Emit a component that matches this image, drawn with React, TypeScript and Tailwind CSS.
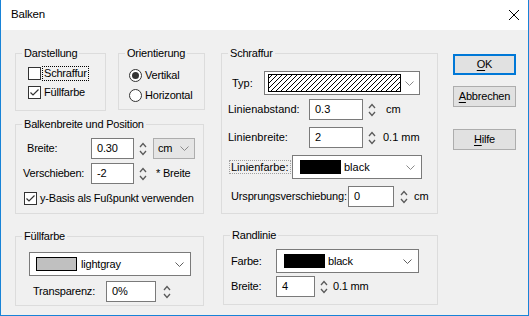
import type { ReactNode } from "react";

function Spin() {
  return (
    <svg width="8" height="21" viewBox="0 0 8 21" className="shrink-0">
      <path d="M1 9 L4 5.5 L7 9" fill="none" stroke="#5a5a5a" strokeWidth="1.3" />
      <path d="M1 13 L4 16.5 L7 13" fill="none" stroke="#5a5a5a" strokeWidth="1.3" />
    </svg>
  );
}

function Chevron({ color = "#5f5f5f" }: { color?: string }) {
  return (
    <svg width="9" height="5" viewBox="0 0 9 5" className="shrink-0">
      <path d="M0.5 0.5 L4.5 4.5 L8.5 0.5" fill="none" stroke={color} strokeWidth="1" />
    </svg>
  );
}

function Check({ checked = false }: { checked?: boolean }) {
  return (
    <span className="flex h-[13px] w-[13px] shrink-0 items-center justify-center border border-[#333] bg-white">
      {checked && (
        <svg width="11" height="11" viewBox="0 0 11 11">
          <path d="M1.5 5.5 L4 8 L9.5 2.5" fill="none" stroke="#333" strokeWidth="1.2" />
        </svg>
      )}
    </span>
  );
}

function Radio({ checked = false }: { checked?: boolean }) {
  return (
    <span className="flex h-[13px] w-[13px] shrink-0 items-center justify-center rounded-full border border-[#333] bg-white">
      {checked && <span className="h-[7px] w-[7px] rounded-full bg-[#333]" />}
    </span>
  );
}

function Group({
  title,
  className,
  children,
}: {
  title: string;
  className: string;
  children: ReactNode;
}) {
  return (
    <fieldset className={`border border-[#dcdcdc] ${className}`}>
      <legend className="ml-[6px] px-[2px] leading-[16px] tracking-[-0.2px]">{title}</legend>
      {children}
    </fieldset>
  );
}

function Field({ w, value }: { w: string; value: string }) {
  return (
    <div className={`flex h-[21px] shrink-0 items-center border border-[#7a7a7a] bg-white pl-[5px] ${w}`}>
      {value}
    </div>
  );
}

function Button({ label, mn, primary = false }: { label: string; mn: string; primary?: boolean }) {
  return (
    <div
      className={`flex h-[21px] w-[63px] items-center justify-center bg-[#e1e1e1] ${
        primary ? "border-2 border-[#0078d7]" : "border border-[#adadad]"
      }`}
    >
      <span>
        <span className="underline underline-offset-2">{mn}</span>
        {label}
      </span>
    </div>
  );
}

export default function App() {
  const hatch = [];
  for (let x = -18; x < 140; x += 5) hatch.push(x);

  return (
    <div className="flex h-[316px] w-[529px] flex-col whitespace-nowrap border-x border-b border-[#1883d7] font-['Liberation_Sans',Arial,sans-serif] text-[11px] text-black">
      {/* Title bar */}
      <div className="flex h-[30px] shrink-0 items-center justify-between bg-white pl-[10px] pr-[9px]">
        <span className="text-[11.5px] tracking-[-0.2px]">Balken</span>
        <svg width="10" height="10" viewBox="0 0 10 10">
          <path d="M0 0 L10 10 M10 0 L0 10" stroke="#000" strokeWidth="1" />
        </svg>
      </div>

      <div className="flex flex-1 bg-[#f0f0f0] pl-[14px] pt-[15px]">
        {/* Left column */}
        <div className="flex w-[190px] flex-col tracking-[-0.2px]">
          <div className="flex">
            <Group title="Darstellung" className="h-[66px] w-[91px]">
              <div className="flex flex-col gap-[6px] pl-[12px] pt-[6px]">
                <div className="flex h-[13px] items-center gap-[1px]">
                  <Check />
                  <span className="border border-dotted border-black px-px leading-[13px]">Schraffur</span>
                </div>
                <div className="flex h-[13px] items-center gap-[2px]">
                  <Check checked />
                  <span className="px-px">Füllfarbe</span>
                </div>
              </div>
            </Group>
            <Group title="Orientierung" className="ml-[12px] h-[65px] w-[87px]">
              <div className="flex flex-col gap-[7px] pl-[10px] pt-[8px]">
                <div className="flex h-[13px] items-center gap-[3px]">
                  <Radio checked />
                  <span>Vertikal</span>
                </div>
                <div className="flex h-[13px] items-center gap-[3px]">
                  <Radio />
                  <span>Horizontal</span>
                </div>
              </div>
            </Group>
          </div>

          <Group title="Balkenbreite und Position" className="mt-[5px] h-[98px] w-[189px]">
            <div className="flex flex-col">
              <div className="mt-[6px] flex items-center">
                <span className="w-[75px] pl-[11px]">Breite:</span>
                <Field w="w-[43px]" value="0.30" />
                <span className="ml-[5px]">
                  <Spin />
                </span>
                <div className="ml-[6px] flex h-[21px] w-[42px] items-center justify-between border border-[#adadad] bg-[#e5e5e5] pl-[4px] pr-[5px]">
                  <span>cm</span>
                  <Chevron color="#8a8a8a" />
                </div>
              </div>
              <div className="mt-[4px] flex items-center">
                <span className="w-[75px] pl-[7px]">Verschieben:</span>
                <Field w="w-[43px]" value="-2" />
                <span className="ml-[5px]">
                  <Spin />
                </span>
                <span className="ml-[9px]">* Breite</span>
              </div>
              <div className="mt-[8px] flex h-[13px] items-center gap-[3px] pl-[8px]">
                <Check checked />
                <span>y-Basis als Fußpunkt verwenden</span>
              </div>
            </div>
          </Group>

          <Group title="Füllfarbe" className="mt-[14px] h-[78px] w-[189px]">
            <div className="flex flex-col pl-[13px]">
              <div className="mt-[8px] flex h-[24px] w-[162px] items-center border border-[#7a7a7a] bg-white pl-[6px] pr-[6px]">
                <span className="h-[14px] w-[41px] shrink-0 border border-black bg-[#c0c0c0]" />
                <span className="ml-[4px] flex-1">lightgray</span>
                <Chevron />
              </div>
              <div className="mt-[5px] flex items-center">
                <span className="w-[77px] pl-[4px]">Transparenz:</span>
                <Field w="w-[50px]" value="0%" />
                <span className="ml-[7px]">
                  <Spin />
                </span>
              </div>
            </div>
          </Group>
        </div>

        {/* Middle column */}
        <div className="ml-[16px] flex w-[217px] flex-col">
          <Group title="Schraffur" className="h-[169px] w-[217px]">
            <div className="flex flex-col">
              <div className="mt-[10px] flex items-center">
                <span className="w-[42px] pl-[10px]">Typ:</span>
                <div className="flex h-[24px] w-[156px] items-center border border-[#7a7a7a] bg-white pl-[3px] pr-[5px]">
                  <svg width="133" height="18" viewBox="0 0 133 18" className="shrink-0">
                    <defs>
                      <clipPath id="hb">
                        <rect x="0" y="0" width="133" height="18" />
                      </clipPath>
                    </defs>
                    <rect x="0" y="0" width="133" height="18" fill="#fff" />
                    <g clipPath="url(#hb)" stroke="#000" strokeWidth="1">
                      {hatch.map((x) => (
                        <line key={x} x1={x} y1="18" x2={x + 18} y2="0" />
                      ))}
                    </g>
                    <rect x="0.5" y="0.5" width="132" height="17" fill="none" stroke="#000" strokeWidth="1" />
                  </svg>
                  <span className="flex-1" />
                  <Chevron color="#8a8a8a" />
                </div>
              </div>
              <div className="mt-[4px] flex items-center">
                <span className="w-[87px] pl-[6px]">Linienabstand:</span>
                <Field w="w-[54px]" value="0.3" />
                <span className="ml-[5px]">
                  <Spin />
                </span>
                <span className="ml-[10px]">cm</span>
              </div>
              <div className="mt-[7px] flex items-center">
                <span className="w-[87px] pl-[6px]">Linienbreite:</span>
                <Field w="w-[54px]" value="2" />
                <span className="ml-[5px]">
                  <Spin />
                </span>
                <span className="ml-[7px]">0.1 mm</span>
              </div>
              <div className="mt-[7px] flex items-center">
                <span className="w-[70px] pl-[7px]">
                  <span className="border border-dotted border-[#a0a0a0] px-px">Linienfarbe:</span>
                </span>
                <div className="flex h-[24px] w-[130px] items-center border border-[#7a7a7a] bg-white pl-[7px] pr-[6px]">
                  <span className="h-[14px] w-[41px] shrink-0 bg-black" />
                  <span className="ml-[3px] flex-1">black</span>
                  <Chevron color="#8a8a8a" />
                </div>
              </div>
              <div className="mt-[7px] flex items-center">
                <span className="w-[126px] pl-[9px] tracking-[-0.15px]">Ursprungsverschiebung:</span>
                <Field w="w-[46px]" value="0" />
                <span className="ml-[6px]">
                  <Spin />
                </span>
                <span className="ml-[6px]">cm</span>
              </div>
            </div>
          </Group>

          <Group title="Randlinie" className="ml-[2px] mt-[13px] h-[78px] w-[215px]">
            <div className="flex flex-col tracking-[-0.2px]">
              <div className="mt-[6px] flex items-center">
                <span className="w-[52px] pl-[7px]">Farbe:</span>
                <div className="flex h-[24px] w-[143px] items-center border border-[#7a7a7a] bg-white pl-[7px] pr-[6px]">
                  <span className="h-[14px] w-[41px] shrink-0 bg-black" />
                  <span className="ml-[3px] flex-1">black</span>
                  <Chevron />
                </div>
              </div>
              <div className="mt-[3px] flex items-center">
                <span className="w-[52px] pl-[7px]">Breite:</span>
                <Field w="w-[39px]" value="4" />
                <span className="ml-[5px]">
                  <Spin />
                </span>
                <span className="ml-[5px]">0.1 mm</span>
              </div>
            </div>
          </Group>
        </div>

        {/* Buttons */}
        <div className="ml-[15px] flex flex-col pt-[9px] tracking-[-0.2px]">
          <Button mn="O" label="K" primary />
          <div className="mt-[11px]">
            <Button mn="A" label="bbrechen" />
          </div>
          <div className="mt-[22px]">
            <Button mn="H" label="ilfe" />
          </div>
        </div>
      </div>
    </div>
  );
}
